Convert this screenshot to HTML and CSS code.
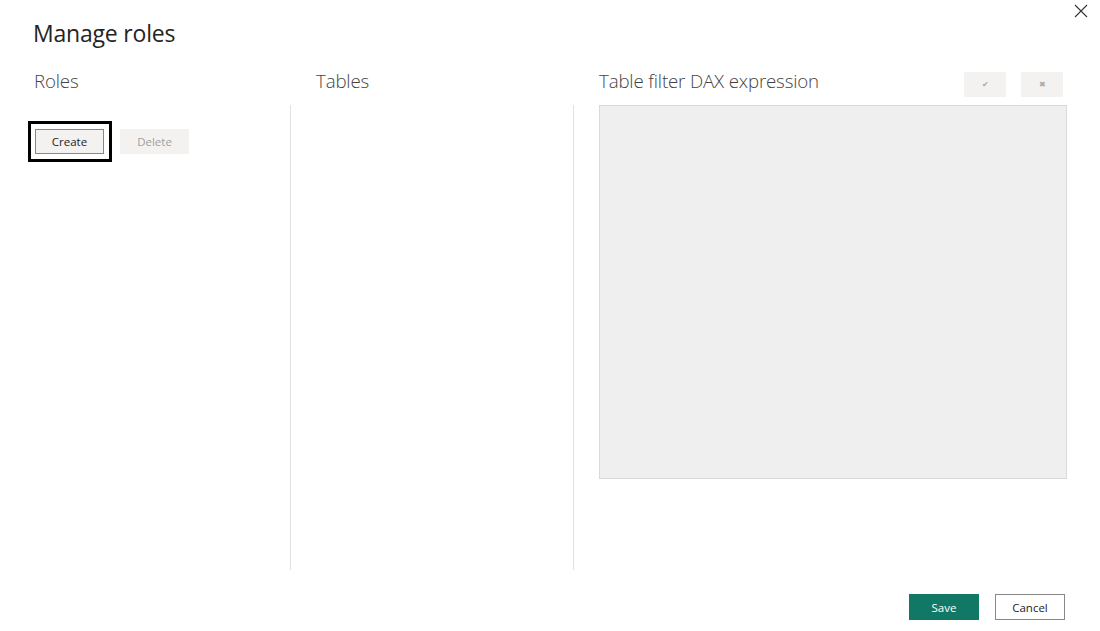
FILE: index.html
```html
<!DOCTYPE html>
<html lang="en">
<head>
<meta charset="utf-8">
<title>Manage roles</title>
<link rel="stylesheet" href="styles.css">
</head>
<body>
<div class="dialog">
  <header class="dialog-header">
    <h1 class="title">Manage roles</h1>
    <button class="close-btn" aria-label="Close">
      <svg width="14" height="14" viewBox="0 0 14 14"><path d="M1 1 L13 13 M13 1 L1 13" stroke="#333" stroke-width="1.1" fill="none"/></svg>
    </button>
  </header>
  <main class="columns">
    <section class="col col-roles">
      <div class="col-head"><h2 class="col-title">Roles</h2></div>
      <div class="col-body roles-body">
        <div class="btn-row">
          <span class="focus-ring"><button class="btn btn-default">Create</button></span>
          <button class="btn btn-disabled">Delete</button>
        </div>
      </div>
    </section>
    <section class="col col-tables">
      <div class="col-head"><h2 class="col-title">Tables</h2></div>
      <div class="col-body divided"></div>
    </section>
    <section class="col col-dax">
      <div class="col-head dax-head">
        <h2 class="col-title">Table filter DAX expression</h2>
        <div class="dax-actions">
          <button class="icon-btn" aria-label="Apply">&#x2714;</button>
          <button class="icon-btn" aria-label="Discard">&#x2716;</button>
        </div>
      </div>
      <div class="col-body divided dax-body">
        <div class="dax-editor"></div>
      </div>
    </section>
  </main>
  <footer class="dialog-footer">
    <button class="btn btn-primary">Save</button>
    <button class="btn btn-outline">Cancel</button>
  </footer>
</div>
</body>
</html>
```
FILE: styles.css
```css
* { box-sizing: border-box; }
html, body { margin: 0; padding: 0; background: #fff; }
body { font-family: "Open Sans", "Noto Sans", sans-serif; color: #252423; }

.dialog {
  width: 1100px;
  height: 631px;
  display: flex;
  flex-direction: column;
}

.dialog-header {
  height: 65px;
  display: flex;
  justify-content: space-between;
  align-items: flex-start;
  padding: 0 12px 0 33px;
}
.title {
  margin: 17px 0 0;
  font-size: 23px;
  line-height: 32px;
  font-weight: 400;
  color: #252423;
  letter-spacing: -0.2px;
}
.close-btn {
  margin-top: 4px;
  width: 14px;
  height: 14px;
  padding: 0;
  border: 0;
  background: none;
  display: flex;
}

.columns {
  height: 505px;
  display: grid;
  grid-template-columns: 290px 283px 1fr;
}
.col { display: flex; flex-direction: column; }
.col-head {
  height: 40px;
  display: flex;
  align-items: flex-start;
}
.col-title {
  margin: 3px 0 0;
  font-size: 18.7px;
  line-height: 26px;
  font-weight: 300;
  color: #444342;
  letter-spacing: -0.15px;
}
.col-roles .col-head { padding-left: 34px; }
.col-tables .col-head { padding-left: 26px; }
.col-dax .col-head { padding-left: 26px; padding-right: 37px; justify-content: space-between; }

.col-body { flex: 1; }
.divided { border-left: 1px solid #e1e1e1; }

.roles-body { padding: 16px 0 0 28px; }
.btn-row { display: flex; align-items: center; gap: 8px; }
.focus-ring {
  display: inline-flex;
  border: 3px solid #000;
  padding: 5px 5px 5px 4px;
}

.btn {
  font-family: "Open Sans", "Noto Sans", sans-serif;
  font-size: 11.5px;
  height: 26px;
  width: 69px;
  padding: 0;
  border-radius: 0;
  cursor: default;
}
.btn-default {
  background: #f3f2f1;
  border: 1px solid #8a8886;
  color: #252423;
  height: 25px;
}
.btn-disabled {
  background: #f3f2f1;
  border: 1px solid #f3f2f1;
  color: #a19f9d;
  height: 25px;
}

.dax-actions { display: flex; gap: 15px; margin-top: 7px; }
.icon-btn {
  width: 42px;
  height: 25px;
  background: #f3f2f1;
  border: 0;
  padding: 0;
  color: #a8a8a8;
  font-size: 8px;
  line-height: 25px;
}

.dax-body { padding: 0 33px 91px 25px; }
.dax-editor {
  height: 374px;
  background: #efefef;
  border: 1px solid #d9d9d9;
}

.dialog-footer {
  display: flex;
  justify-content: flex-end;
  gap: 16px;
  padding: 24px 35px 0 0;
}
.btn-primary {
  background: #117865;
  border: 1px solid #117865;
  color: #fff;
  width: 70px;
}
.btn-outline {
  background: #fff;
  border: 1px solid #8a8886;
  color: #252423;
  width: 70px;
}
```
